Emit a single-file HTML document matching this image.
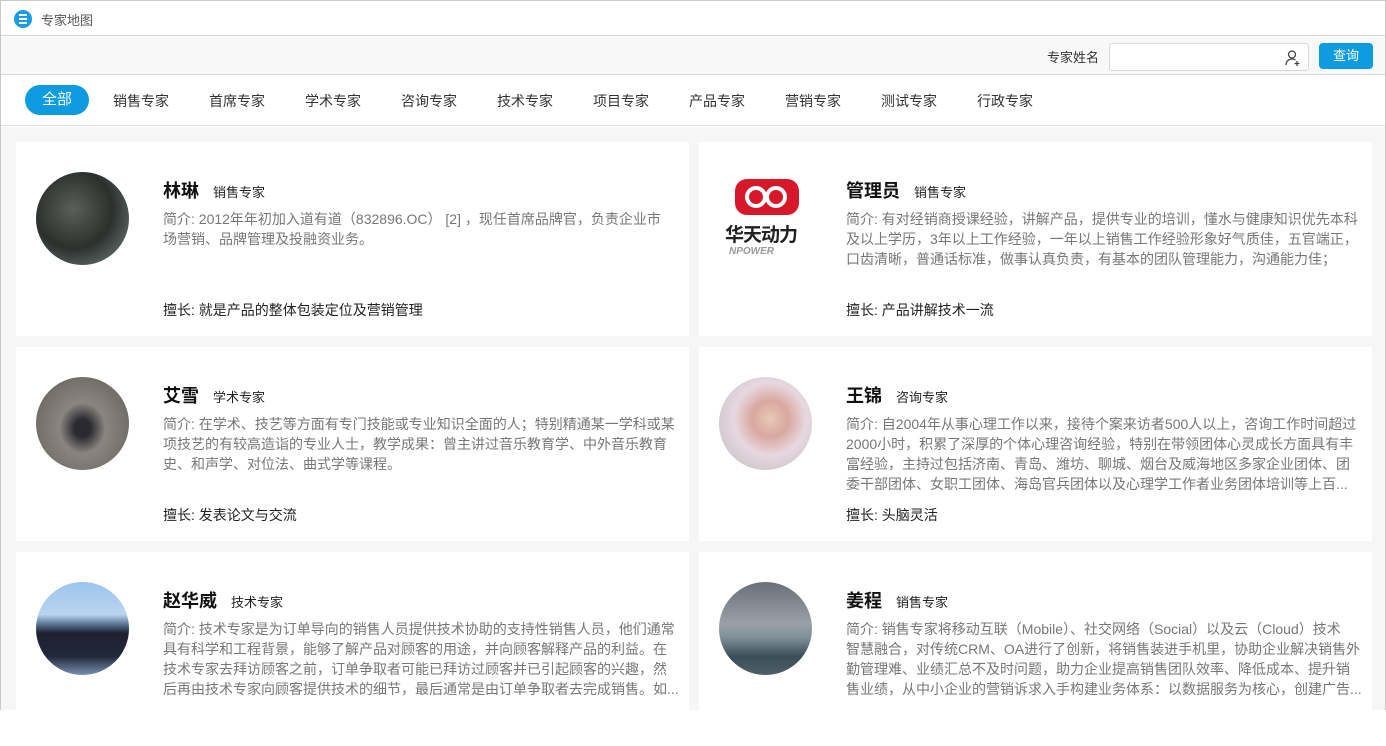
<!DOCTYPE html><html><head><meta charset="utf-8"><style>
*{margin:0;padding:0;box-sizing:border-box}
body{width:1386px;height:710px;overflow:hidden;font-family:"Liberation Sans","Noto Sans CJK SC",sans-serif;background:#fff;position:relative}
.frame{position:absolute;left:0;top:0;width:1386px;height:710px;border:1px solid #c8c8c8;border-bottom:none}
.title{position:absolute;left:1px;top:1px;right:1px;height:35px;border-bottom:1px solid #d4d4d4;background:#fff}
.title .ic{position:absolute;left:13px;top:9px;width:18px;height:18px;border-radius:50%;background:#1a9be6}
.title .ic i{position:absolute;left:5px;width:8px;height:2px;background:#fff}
.title span{position:absolute;left:40px;top:9px;font-size:13px;color:#555}
.search{position:absolute;left:1px;right:1px;top:37px;height:38px;background:#f8f8f8;border-bottom:1px solid #d8d8d8}
.search .lbl{position:absolute;left:1046px;top:10px;font-size:13px;color:#333}
.search .inp{position:absolute;left:1108px;top:6px;width:200px;height:28px;border:1px solid #d8d8d8;border-radius:3px;background:#fff}
.search .btn{position:absolute;left:1318px;top:6px;width:54px;height:26px;border-radius:4px;background:#0e9be0;color:#fff;font-size:13px;text-align:center;line-height:26px}
.tabs{position:absolute;left:1px;right:1px;top:76px;height:50px;background:#fff;border-bottom:1px solid #ddd}
.tabs span{position:absolute;top:15px;font-size:14px;color:#333}
.tabs .on{left:24px;top:9px;width:64px;height:30px;border-radius:15px;background:#0e9be0;color:#fff;text-align:center;line-height:30px;font-size:15px}
.content{position:absolute;left:1px;right:1px;top:127px;bottom:0;background:#f6f6f6}
.card{position:absolute;width:673px;height:194px;background:#fff}
.av{position:absolute;left:20px;top:30px;width:93px;height:93px;border-radius:50%;overflow:hidden}
.nm{position:absolute;left:147px;top:35px;font-size:18px;font-weight:bold;color:#111}
.nm small{font-size:13px;font-weight:normal;margin-left:14px;color:#222}
.ds{position:absolute;left:147px;top:67px;width:520px;font-size:14px;line-height:20px;color:#777;height:80px;overflow:hidden;white-space:nowrap}
.sk{position:absolute;left:147px;top:158px;font-size:14px;color:#222}
</style></head><body>
<div class="title"><div class="ic"><i style="top:4px"></i><i style="top:8px"></i><i style="top:12px"></i></div><span>专家地图</span></div>
<div class="search"><span class="lbl">专家姓名</span><div class="inp"><svg style="position:absolute;right:6px;top:5px" width="18" height="18" viewBox="0 0 18 18" fill="none" stroke="#444" stroke-width="1.3"><circle cx="8" cy="5.5" r="3.5"/><path d="M2 16c0-4 3-6 6-6 1.5 0 2.5.4 3.5 1"/><path d="M13 12v5M10.5 14.5h5"/></svg></div><div class="btn">查询</div></div>
<div class="tabs"><span class="on">全部</span><span style="left:112px">销售专家</span><span style="left:208px">首席专家</span><span style="left:304px">学术专家</span><span style="left:400px">咨询专家</span><span style="left:496px">技术专家</span><span style="left:592px">项目专家</span><span style="left:688px">产品专家</span><span style="left:784px">营销专家</span><span style="left:880px">测试专家</span><span style="left:976px">行政专家</span></div>
<div class="content">
<div class="card" style="left:15px;top:15px"><div class="av" style="background:radial-gradient(circle at 40% 40%,#5a5f5a,#2c302d 50%,#7a8a88)"></div><div class="nm">林琳<small>销售专家</small></div><div class="ds">简介: 2012年年初加入道有道（832896.OC） [2] ，现任首席品牌官，负责企业市<br>场营销、品牌管理及投融资业务。</div><div class="sk">擅长: 就是产品的整体包装定位及营销管理</div></div>
<div class="card" style="left:698px;top:15px"><div class="av" style="border-radius:0;background:#fff"><div style="position:absolute;left:16px;top:7px;width:64px;height:36px;border-radius:12px;background:#d7182a"></div><div style="position:absolute;left:26px;top:14px;width:22px;height:22px;border:4px solid #fff;border-radius:50%"></div><div style="position:absolute;left:46px;top:14px;width:22px;height:22px;border:4px solid #fff;border-radius:50%"></div><div style="position:absolute;left:6px;top:48px;font-size:19px;font-weight:bold;color:#222;letter-spacing:-1px">华天动力</div><div style="position:absolute;left:10px;top:74px;font-size:10px;font-weight:bold;color:#999;font-style:italic">NPOWER</div></div><div class="nm">管理员<small>销售专家</small></div><div class="ds">简介: 有对经销商授课经验，讲解产品，提供专业的培训，懂水与健康知识优先本科<br>及以上学历，3年以上工作经验，一年以上销售工作经验形象好气质佳，五官端正，<br>口齿清晰，普通话标准，做事认真负责，有基本的团队管理能力，沟通能力佳；</div><div class="sk">擅长: 产品讲解技术一流</div></div>
<div class="card" style="left:15px;top:220px"><div class="av" style="background:radial-gradient(ellipse at 50% 55%,#2a2a30 0,#2a2a30 12%,#8a8580 35%,#5e5a55)"></div><div class="nm">艾雪<small>学术专家</small></div><div class="ds">简介: 在学术、技艺等方面有专门技能或专业知识全面的人；特别精通某一学科或某<br>项技艺的有较高造诣的专业人士，教学成果：曾主讲过音乐教育学、中外音乐教育<br>史、和声学、对位法、曲式学等课程。</div><div class="sk">擅长: 发表论文与交流</div></div>
<div class="card" style="left:698px;top:220px"><div class="av" style="background:radial-gradient(circle at 55% 45%,#e8c8b8 0,#d9a8a0 25%,#e7d8e0 50%,#b8b8b8)"></div><div class="nm">王锦<small>咨询专家</small></div><div class="ds">简介: 自2004年从事心理工作以来，接待个案来访者500人以上，咨询工作时间超过<br>2000小时，积累了深厚的个体心理咨询经验，特别在带领团体心灵成长方面具有丰<br>富经验，主持过包括济南、青岛、潍坊、聊城、烟台及威海地区多家企业团体、团<br>委干部团体、女职工团体、海岛官兵团体以及心理学工作者业务团体培训等上百...</div><div class="sk">擅长: 头脑灵活</div></div>
<div class="card" style="left:15px;top:425px"><div class="av" style="background:linear-gradient(#9cc4ee 0,#b8d4ee 35%,#5c7898 45%,#202030 55%,#20283a 80%,#7a90b0)"></div><div class="nm">赵华威<small>技术专家</small></div><div class="ds">简介: 技术专家是为订单导向的销售人员提供技术协助的支持性销售人员，他们通常<br>具有科学和工程背景，能够了解产品对顾客的用途，并向顾客解释产品的利益。在<br>技术专家去拜访顾客之前，订单争取者可能已拜访过顾客并已引起顾客的兴趣，然<br>后再由技术专家向顾客提供技术的细节，最后通常是由订单争取者去完成销售。如...</div></div>
<div class="card" style="left:698px;top:425px"><div class="av" style="background:linear-gradient(#6a7078 0,#9aa0a8 45%,#7f8f98 60%,#3c4c58 80%,#506068)"></div><div class="nm">姜程<small>销售专家</small></div><div class="ds">简介: 销售专家将移动互联（Mobile）、社交网络（Social）以及云（Cloud）技术<br>智慧融合，对传统CRM、OA进行了创新，将销售装进手机里，协助企业解决销售外<br>勤管理难、业绩汇总不及时问题，助力企业提高销售团队效率、降低成本、提升销<br>售业绩，从中小企业的营销诉求入手构建业务体系：以数据服务为核心，创建广告...</div></div>
</div>
<div class="frame"></div>
</body></html>
